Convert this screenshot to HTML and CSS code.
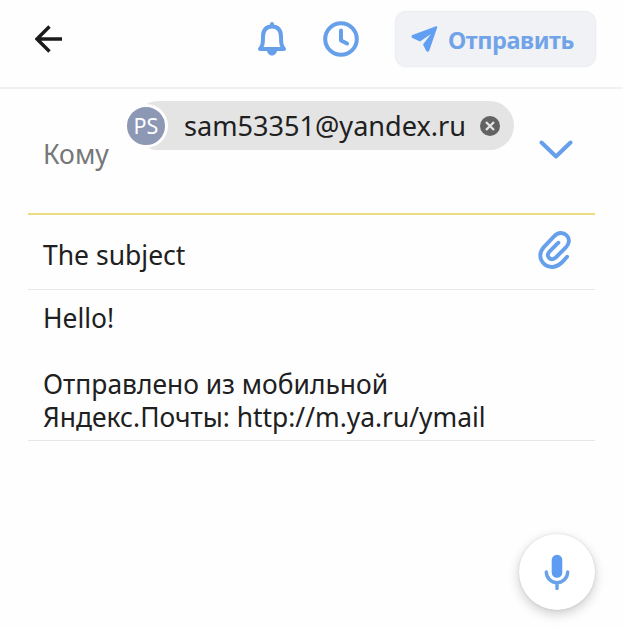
FILE: index.html
```html
<!DOCTYPE html>
<html lang="ru">
<head>
<meta charset="utf-8">
<title>Новое письмо</title>
<link rel="stylesheet" href="styles.css">
</head>
<body>
<header class="toolbar">
  <svg class="back" width="28" height="28" viewBox="0 0 28 28"><path d="M27 14H2.500M14.500 1.500L2 14L14.500 26.500"/></svg>
  <svg class="bell" width="30" height="36" viewBox="0 0 30 36"><path class="line" d="M3 28C5.500 25 6 23 6 16C6 9 9 5.500 15 5.500S24 9 24 16C24 23 24.500 25 27 28Z"/><path class="solid" d="M13 5V3A2 2 0 0 1 17 3V5ZM9.500 28H20.500C20 32 18 34.500 15 34.500S10 32 9.500 28Z"/></svg>
  <svg class="clock" width="36" height="36" viewBox="0 0 36 36"><circle class="line" cx="18" cy="18" r="15.800"/><path class="line" d="M18 9.500V19.500L24 22.500"/></svg>
  <button class="send">
    <svg width="27" height="27" viewBox="0 0 27 27"><path d="M25 .2Q26.500 0 26.200 1.500L18.300 24.500Q17 27 15 24.500L12 18.500L20 8L9 15.500L1.500 12Q-.6 10.500 1.500 9Z"/></svg>
    <span>Отправить</span>
  </button>
</header>
<main class="form">
  <section class="row recipients">
    <label class="label">Кому</label>
    <div class="chip">
      <span class="avatar">PS</span>
      <span class="address">sam53351@yandex.ru</span>
      <svg width="20" height="20" viewBox="0 0 20 20"><circle cx="10" cy="10" r="10"/><path d="M6 6L14 14M14 6L6 14"/></svg>
    </div>
    <svg class="expand" width="34" height="20" viewBox="0 0 34 20"><path class="line" d="M2.500 2.500L17 16.500L31.500 2.500"/></svg>
  </section>
  <section class="row subject">
    <span class="subject-text">The subject</span>
    <svg class="clip" width="33" height="39" viewBox="0 0 34 40"><path class="line" d="M30 26.500L25.500 31.500C20.500 37 13 39 7 34.500C1 29.500 1 22 6 16.500L16.500 5.500C20.500 1 26 1 29.500 4.500C33 8 32.500 13 28.500 17L18 27.500C12.500 31.500 8 26 11.500 21.500L21 12"/></svg>
  </section>
  <section class="row message">
    <p class="greeting">Hello!</p>
    <p class="signature">Отправлено из мобильной<br>Яндекс.Почты: http://m.ya.ru/ymail</p>
  </section>
</main>
<button class="voice">
  <svg width="26" height="36" viewBox="0 0 26 36"><rect x="7.700" y=".7" width="10.600" height="23" rx="5.300"/><path d="M2.300 18A10.700 10.700 0 0 0 23.700 18M13 29V34.500"/></svg>
</button>
</body>
</html>
```
FILE: styles.css
```css
* { box-sizing: border-box; }
body {
  margin: 0;
  width: 623px;
  height: 628px;
  overflow: hidden;
  background: #fefefe;
  color: #202020;
  font-family: "Noto Sans", sans-serif;
  font-size: 26.4px;
}
svg { display: block; flex: none; }
button { border: 0; font-family: inherit; }
.line { fill: none; stroke: #66a0ea; stroke-width: 4; stroke-linecap: round; stroke-linejoin: round; }
.solid { fill: #66a0ea; }
.toolbar {
  display: flex;
  align-items: flex-start;
  height: 89px;
  padding: 11px 27px 0 35px;
  border-bottom: 2px solid #f1f1f2;
}
.back { margin-top: 14px; fill: none; stroke: #1b1b1b; stroke-width: 3.4; }
.bell { margin: 10px 0 0 194px; }
.clock { margin: 10px 0 0 36px; }
.send {
  display: flex;
  align-items: center;
  width: 201px;
  height: 56px;
  margin-left: auto;
  padding: 0 0 0 16px;
  border-radius: 12px;
  background: #f0f2f5;
  box-shadow: inset 0 0 0 1px #eceef0, 0 0 2px #eceef0;
  color: #70a3e8;
  font-size: 23.5px;
  font-weight: 700;
  letter-spacing: -.45px;
}
.send svg { fill: #609ff1; }
.send span { margin: 1px 0 0 10px; }
.form { padding: 0 28px; }
.row { display: flex; padding-left: 15px; border-bottom: 1px solid #e7e7e7; }
.recipients { height: 126px; border-bottom: 2px solid #ecdc83; }
.label { width: 91px; margin-top: 46px; color: #777; font-size: 26.6px; line-height: 38px; }
.chip {
  display: flex;
  align-items: center;
  width: 380px;
  height: 49px;
  margin-top: 12px;
  padding-right: 14px;
  border-radius: 25px;
  background: #e4e4e4;
}
.avatar {
  width: 44px;
  height: 44px;
  display: flex;
  align-items: center;
  justify-content: center;
  flex: none;
  margin-left: -10px;
  border: 3px solid #fefefe;
  border-radius: 50%;
  background: #8d98b5;
  color: #fff;
  font-size: 21.5px;
}
.address { margin-left: 16px; font-size: 27.1px; }
.chip svg { margin-left: auto; fill: #626262; }
.chip path { stroke: #e4e4e4; stroke-width: 2.4; }
.expand { margin: 51px 0 0 25px; }
.subject { height: 75px; align-items: center; justify-content: space-between; padding-right: 24px; }
.subject-text { margin-top: 6px; font-size: 26.5px; }
.clip { margin-bottom: 3px; }
.message { display: block; height: 151px; padding-top: 12px; line-height: 33px; }
.message p { margin: 0; }
.message .signature { margin-top: 33px; white-space: nowrap; }
.voice {
  position: absolute;
  left: 519px;
  top: 534px;
  width: 76px;
  height: 76px;
  padding: 0;
  display: flex;
  align-items: center;
  justify-content: center;
  border-radius: 50%;
  background: #fff;
  box-shadow: 0 4px 12px rgba(0,0,0,.2), 0 0 3px rgba(0,0,0,.1);
}
.voice svg { fill: #5e9cf3; }
.voice path { fill: none; stroke: #6aa2ea; stroke-width: 3.4; stroke-linecap: round; }
```
